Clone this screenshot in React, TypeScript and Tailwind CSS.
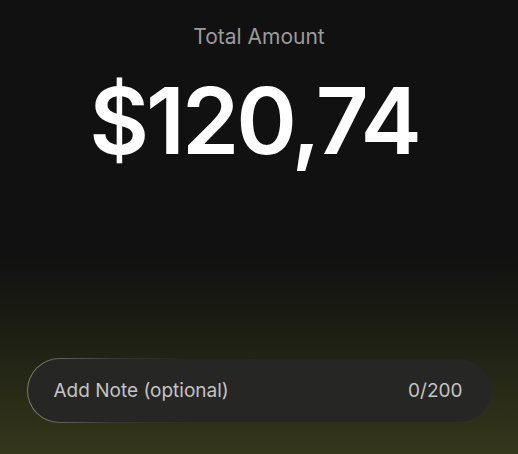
export default function App() {
  return (
    <div
      className="flex h-[454px] w-[518px] flex-col items-center bg-[linear-gradient(to_bottom,#111111_0px,#111111_255px,#1c1e13_330px,#34371b_454px)] text-white"
      style={{ fontFamily: "Inter, 'Noto Sans', sans-serif" }}
    >
      <p className="mt-[23px] text-[21px] leading-[28px] text-[#9b9b9b]">Total Amount</p>
      <p className="mt-[24px] pr-[10px] text-[92px] font-semibold leading-[92px] tracking-[-3px]">$120,74</p>

      <div className="mt-auto mb-[31px] w-[465px] rounded-full bg-[linear-gradient(to_right,#7a7a78,#3a3a38_18%,transparent_35%)] p-px">
        <div className="flex h-[63px] items-center justify-between rounded-full bg-[#262624] pl-[26px] pr-[28px] pt-[2px] text-[19px] text-[#c4c4c4]">
          <span>Add Note (optional)</span>
          <span>0/200</span>
        </div>
      </div>
    </div>
  );
}
